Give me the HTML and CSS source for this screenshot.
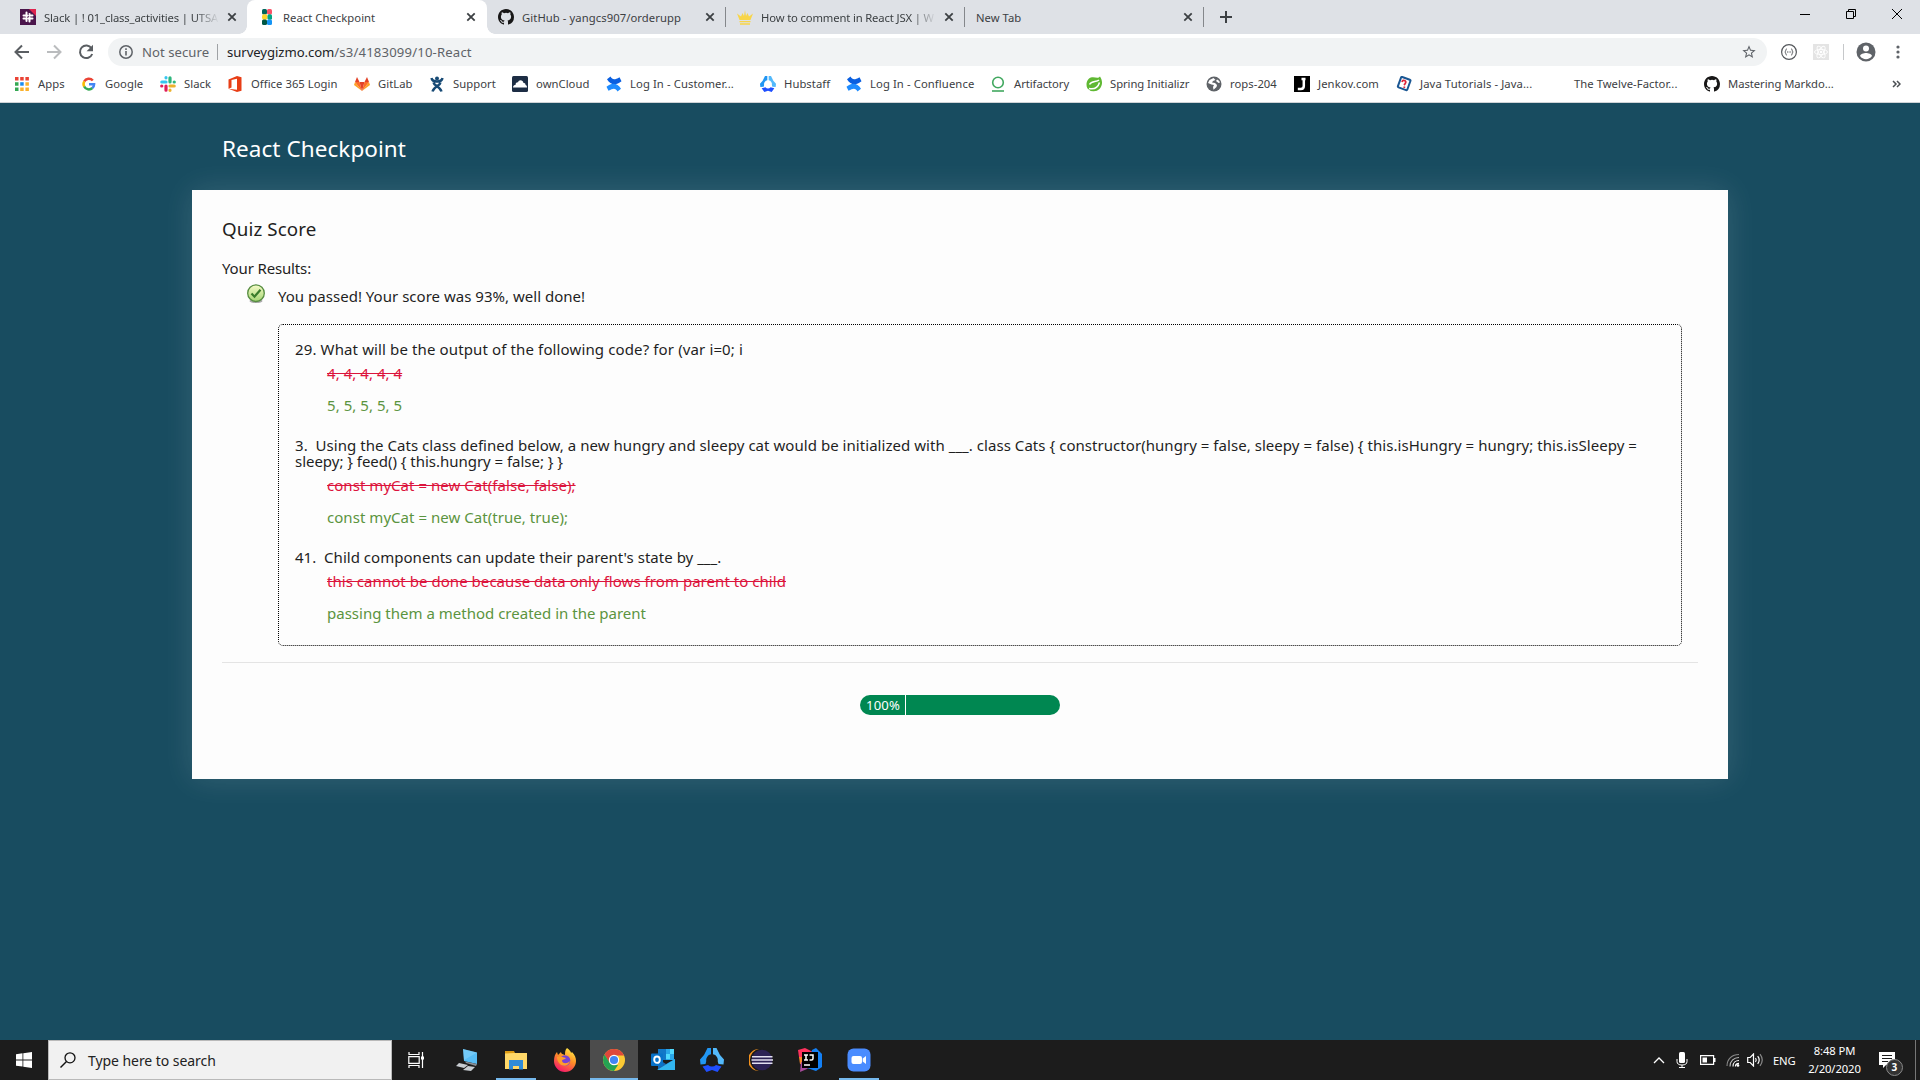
FILE: index.html
```html
<!DOCTYPE html>
<html lang="en">
<head>
<meta charset="utf-8">
<title>React Checkpoint</title>
<link rel="stylesheet" href="styles.css">
</head>
<body>
<svg class="defs" width="0" height="0" aria-hidden="true">
  <symbol id="github" viewBox="0 0 16 16"><path fill="#181717" d="M8 0C3.58 0 0 3.58 0 8c0 3.54 2.29 6.53 5.47 7.59.4.07.55-.17.55-.38 0-.19-.01-.82-.01-1.49-2.01.37-2.53-.49-2.69-.94-.09-.23-.48-.94-.82-1.13-.28-.15-.68-.52-.01-.53.63-.01 1.08.58 1.23.82.72 1.21 1.87.87 2.33.66.07-.52.28-.87.51-1.07-1.78-.2-3.64-.89-3.64-3.95 0-.87.31-1.59.82-2.15-.08-.2-.36-1.02.08-2.12 0 0 .67-.21 2.2.82a7.4 7.4 0 0 1 4 0c1.53-1.04 2.2-.82 2.2-.82.44 1.1.16 1.92.08 2.12.51.56.82 1.27.82 2.15 0 3.07-1.87 3.75-3.65 3.95.29.25.54.73.54 1.48 0 1.07-.01 1.93-.01 2.2 0 .21.15.46.55.38A8 8 0 0 0 16 8c0-4.42-3.58-8-8-8z"/></symbol>
  <symbol id="close" viewBox="0 0 10 10"><path d="M1.3 1.3l7.4 7.4M8.7 1.3L1.3 8.7" stroke="#3c4043" stroke-width="1.8"/></symbol>
  <symbol id="confluence" viewBox="0 0 16 16"><path fill="#0a5fe0" d="M1 3.200L4.500 .5C6.500 4 8.500 4.200 13.500 1.200l2 4C10 9.800 4.500 9 1 3.200z"/><path fill="#1f8cff" d="M15 12.800l-3.500 2.700C9.500 12 7.500 11.800 2.500 14.800l-2-4C6 6.200 11.500 7 15 12.800z"/></symbol>
  <symbol id="slack" viewBox="0 0 16 16"><g stroke-width="3.200" stroke-linecap="round"><path stroke="#36c5f0" d="M1.800 6h4.200M6 1.700v.1"/><path stroke="#2eb67d" d="M10 1.800V6M14.200 6h.1"/><path stroke="#ecb22e" d="M10 10h4.200M10 14.200v.1"/><path stroke="#e01e5a" d="M6 10v4.200M1.700 10h.1"/></g></symbol>
  <symbol id="hubstaff" viewBox="0 0 24 24"><path fill="#2196f3" d="M7.500 0H11v6.300A6 6 0 0 0 6.200 13.500L5.500 16 .5 16.500 0 11.500 4 7z"/><path fill="#53b9fb" d="M16.500 0H13v6.300A6 6 0 0 1 17.800 13.500L18.500 16l5 .5.5-5L20 7z"/><path fill="#1f4fff" d="M2.500 18.500L8 17a6 6 0 0 0 8 0l5.500 1.500L17.500 24 12 22l-5.500 2z"/></symbol>
</svg>

<header class="browser">
  <div class="tabs">
    <div class="tab tab-first">
      <svg class="favicon" viewBox="0 0 16 16"><path fill="#4a154b" d="M0 0h16v16H0z"/><path fill="#e0234e" d="M9 0h7v7z"/><path stroke="#fff" stroke-width="2" stroke-linecap="round" d="M6.500 3.500v4M9.500 5v.1M3.500 6.500h4M9.500 6.500h3M3.500 9.500h3M8.500 9.500h4M6.500 9v3M9.500 8.500v4"/></svg>
      <span class="tab-title faded slack-title">Slack | ! 01_class_activities | UTSA</span>
      <svg class="close"><use href="#close"/></svg>
    </div>
    <div class="tab tab-active">
      <svg class="favicon" viewBox="0 0 16 16"><rect x="3" width="5" height="5.500" rx="1.500" fill="#00665c"/><rect x="8" width="5" height="5.500" rx="1.500" fill="#fa5367"/><rect x="3" y="5.200" width="5.500" height="5.500" rx="2" fill="#fbd62b"/><rect x="8.500" y="5.200" width="4.500" height="5.500" rx="1.500" fill="#00a584"/><rect x="3" y="10.500" width="5" height="5.500" rx="1.500" fill="#005744"/><rect x="8" y="10.500" width="5" height="5.500" rx="1.500" fill="#1595f5"/></svg>
      <span class="tab-title">React Checkpoint</span>
      <svg class="close"><use href="#close"/></svg>
    </div>
    <div class="tab">
      <svg class="favicon"><use href="#github"/></svg>
      <span class="tab-title github-title">GitHub - yangcs907/orderupp</span>
      <svg class="close"><use href="#close"/></svg>
    </div>
    <div class="tab tab-ruled">
      <svg class="favicon" viewBox="0 0 16 16"><path fill="#f8d548" d="M0 4.500l4 3 1.500-3.500L7 7l1-6 1 6 1.500-3L12 7.500l4-3L13.500 11h-11zM2.500 12h11v1.200h-11zM3 14.200h10v1.500H3z"/></svg>
      <span class="tab-title faded jsx-title">How to comment in React JSX | W</span>
      <svg class="close"><use href="#close"/></svg>
    </div>
    <div class="tab tab-ruled tab-last">
      <span class="tab-title">New Tab</span>
      <svg class="close"><use href="#close"/></svg>
    </div>
    <svg class="new-tab" viewBox="0 0 12 12"><path d="M6 0v12M0 6h12" stroke="#3c4043" stroke-width="2"/></svg>
    <div class="window-buttons">
      <svg viewBox="0 0 10 10"><path d="M0 5.500h10" stroke="#000"/></svg>
      <svg viewBox="0 0 10 10"><path d="M.5 2.500h7v7h-7zM2.500 2.500v-2h7v7h-2" fill="none" stroke="#000"/></svg>
      <svg viewBox="0 0 10 10"><path d="M0 0l10 10M10 0L0 10" stroke="#000"/></svg>
    </div>
  </div>

  <div class="toolbar">
    <svg class="nav" viewBox="0 0 16 16"><path d="M15 8H2M8 1.500L1.500 8 8 14.500" fill="none" stroke="#5a5e62" stroke-width="2"/></svg>
    <svg class="nav" viewBox="0 0 16 16"><path d="M1 8h13M8 1.500L14.500 8 8 14.500" fill="none" stroke="#babcbe" stroke-width="2"/></svg>
    <svg class="nav" viewBox="0 0 16 16"><path d="M13.500 4.200A6.300 6.300 0 1 0 14.200 10" fill="none" stroke="#5a5e62" stroke-width="2"/><path d="M15 .8v6.400H8.600z" fill="#5a5e62"/></svg>
    <div class="omnibox">
      <svg class="info" viewBox="0 0 14 14"><circle cx="7" cy="7" r="6.200" fill="none" stroke="#5f6368" stroke-width="1.500"/><path d="M7 6v4.500M7 3.300v1.600" stroke="#5f6368" stroke-width="1.600"/></svg>
      <span class="security">Not secure</span>
      <span class="url"><b>surveygizmo.com</b><span>/s3/4183099/10-React</span></span>
      <svg class="star" viewBox="0 0 24 24"><path fill="#5f6368" d="M22 9.240l-7.190-.62L12 2 9.190 8.630 2 9.240l5.460 4.730L5.820 21 12 17.270 18.180 21l-1.630-7.030L22 9.240zM12 15.400l-3.760 2.270 1-4.280-3.320-2.880 4.380-.38L12 6.100l1.710 4.040 4.380.38-3.320 2.880 1 4.280L12 15.400z"/></svg>
    </div>
    <svg class="ext" viewBox="0 0 16 16"><circle cx="8" cy="8" r="7.400" fill="#fff" stroke="#55585c" stroke-width="1.200"/><path d="M5.800 4.800c-1.400 0-.6 3-2 3.200 1.400.2.600 3.200 2 3.200M10.200 4.800c1.400 0 .6 3 2 3.200-1.400.2-.6 3.200-2 3.200" fill="none" stroke="#55585c"/><path d="M6 8h1M7.600 8h1M9.200 8h1" stroke="#55585c"/></svg>
    <svg class="ext react-ext" viewBox="0 0 16 16"><path fill="#e4e4e4" d="M0 0h16v16H0z"/><g fill="none" stroke="#fff" stroke-width=".9"><ellipse cx="8" cy="8" rx="6.500" ry="2.600"/><ellipse cx="8" cy="8" rx="6.500" ry="2.600" transform="rotate(60 8 8)"/><ellipse cx="8" cy="8" rx="6.500" ry="2.600" transform="rotate(120 8 8)"/></g><circle cx="8" cy="8" r="1.300" fill="#fff"/></svg>
    <i class="toolbar-rule"></i>
    <svg class="avatar" viewBox="0 0 20 20"><circle cx="10" cy="10" r="9.500" fill="#5f6368"/><circle cx="10" cy="6.500" r="3" fill="#fff"/><path fill="#fff" d="M4 14c0-2 4-3.100 6-3.100s6 1.100 6 3.100a7.200 7.200 0 0 1-12 0z"/></svg>
    <svg class="menu" viewBox="0 0 4 16"><g fill="#5f6368"><circle cx="2" cy="3" r="1.600"/><circle cx="2" cy="8" r="1.600"/><circle cx="2" cy="13" r="1.600"/></g></svg>
  </div>

  <nav class="bookmarks">
    <a><svg viewBox="0 0 16 16"><path fill="#ea4335" d="M1 1h3.500v3.500H1zM6.200 1h3.500v3.500H6.200zM11.400 1h3.500v3.500h-3.500z"/><path fill="#34a853" d="M1 6.200h3.500v3.500H1zM1 11.400h3.500v3.500H1z"/><path fill="#1a8cf0" d="M6.200 6.200h3.500v3.500H6.200z"/><path fill="#fbb12b" d="M11.400 6.200h3.500v3.500h-3.500zM6.200 11.400h3.500v3.500H6.200zM11.400 11.400h3.500v3.500h-3.500z"/></svg><span>Apps</span></a>
    <a><svg viewBox="0 0 16 16"><g fill="none" stroke-width="2.500"><path stroke="#ea4335" d="M3.200 5.500A5.200 5.200 0 0 1 11.800 4.500"/><path stroke="#fbbc05" d="M3.300 5.300a5.200 5.200 0 0 0 0 5.400"/><path stroke="#34a853" d="M3.200 10.500a5.200 5.200 0 0 0 8.200 1.500"/><path stroke="#4285f4" d="M8 8.200h5.100a5.200 5.200 0 0 1-1.800 3.900"/></g></svg><span>Google</span></a>
    <a><svg><use href="#slack"/></svg><span>Slack</span></a>
    <a><svg viewBox="0 0 16 16"><path fill="#e83e16" d="M1.500 3.500L10 0l4.500 1.300v13.400L10 16l-8.500-3.200 8.500 1V2.800L4.500 4v7.500l-3 1.300z"/></svg><span>Office 365 Login</span></a>
    <a><svg viewBox="0 0 16 16"><path fill="#fca326" d="M0 9l1-3 7 9zM16 9l-1-3-7 9z"/><path fill="#fc6d26" d="M1 6h4.500L8 15zM15 6h-4.500L8 15z"/><path fill="#e24329" d="M1 6l2-5 2.500 5h5L13 1l2 5h-4.500L8 15 5.500 6z"/></svg><span>GitLab</span></a>
    <a><svg viewBox="0 0 16 16"><circle cx="8" cy="2.500" r="2" fill="#174a75"/><path d="M2.500 2C3 5 6 5.500 8 5.500S13 5 13.500 2M4.500 6.500C5 10 11 10 12.500 15.500M11.500 6.500C11 10 5 10 3.500 15.500" fill="none" stroke="#174a75" stroke-width="2.400"/></svg><span>Support</span></a>
    <a><svg viewBox="0 0 16 16"><rect width="16" height="16" rx="1.500" fill="#1d2d44"/><path fill="#fff" d="M1 11.500c0-2 1.500-2.500 2.500-2.500 0-2 1.500-3 2.500-2.500.5-3 5-3 5.500.5 2-.2 2 1 2 2 1 0 1.500 1 1.500 2.500z"/></svg><span>ownCloud</span></a>
    <a><svg><use href="#confluence"/></svg><span class="wide">Log In - Customer...</span></a>
    <a><svg><use href="#hubstaff"/></svg><span>Hubstaff</span></a>
    <a><svg><use href="#confluence"/></svg><span class="wide">Log In - Confluence</span></a>
    <a><svg viewBox="0 0 16 16"><circle cx="8" cy="6.500" r="5.300" fill="none" stroke="#41a85f" stroke-width="1.600"/><path d="M2 15h12" stroke="#41a85f" stroke-width="1.600"/></svg><span class="snug">Artifactory</span></a>
    <a><svg viewBox="0 0 16 16"><path fill="#5fb832" d="M14 .5c3 4.500 2.500 9.500-.5 12.500a8 7.500 0 0 1-12-.5C-1 8 1.500 2 6 1.300 9 .8 12 3 14 .5z"/><path fill="none" stroke="#fff" stroke-width="1.500" d="M13 4C10.500 6.500 5.500 4.500 3.500 8.500M3 12.500c5 1 9-1 10.500-6"/></svg><span class="snug">Spring Initializr</span></a>
    <a><svg viewBox="0 0 16 16"><circle cx="8" cy="8" r="7.500" fill="#5f6368"/><path fill="#fff" d="M7.500 2L3.500 4 2 7l3.500 1.500L8 9l-1 2 .5 2.800L10.500 11l.5-2-2-2-3-.5L7 5l2.500-1zM11 3.500l-1 1.500 2.500 2 1.500-.5c-.5-1.500-1.500-2.500-3-3z"/></svg><span>rops-204</span></a>
    <a><svg viewBox="0 0 16 16"><path d="M0 0h16v16H0z"/><path d="M9.800 2.500v7.500q0 3-3 3h-3M7.500 3h4" fill="none" stroke="#fff" stroke-width="2.500"/></svg><span class="wide">Jenkov.com</span></a>
    <a><svg viewBox="0 0 16 16"><rect x="3" y="2" width="10" height="11" rx="1" transform="rotate(20 8 8)" fill="#fff" stroke="#1b5793" stroke-width="2"/><path d="M6 6q1-2.500 3-1.300T8 9M8.300 10.500v1.500" fill="none" stroke="#e0263b" stroke-width="1.800"/></svg><span class="wide">Java Tutorials - Java...</span></a>
    <a><i></i><span>The Twelve-Factor...</span></a>
    <a><svg><use href="#github"/></svg><span class="snug">Mastering Markdo...</span></a>
    <svg class="more" viewBox="0 0 9 8"><path d="M1 1l3 3-3 3M5 1l3 3-3 3" fill="none" stroke="#4b4f53" stroke-width="1.500"/></svg>
  </nav>
</header>

<main class="survey">
  <h1>React Checkpoint</h1>
  <section class="card">
    <h2>Quiz Score</h2>
    <p class="results-label">Your Results:</p>
    <div class="passed">
      <svg viewBox="0 0 20 20"><defs><linearGradient id="ok" x2="0" y2="1"><stop stop-color="#f6fbc8"/><stop offset="1" stop-color="#a4d573"/></linearGradient></defs><ellipse cx="10" cy="17" rx="6.500" ry="2" fill="#aaa"/><circle cx="10" cy="9.200" r="8.300" fill="url(#ok)" stroke="#568d40" stroke-width="1.300"/><path d="M5.500 9.500l3 3.200 6-7" fill="none" stroke="#3b7c2b" stroke-width="2.200"/></svg>
      <p>You passed! Your score was 93%, well done!</p>
    </div>
    <div class="answers">
      <article>
        <p class="q-loop">29. What will be the output of the following code? for (var i=0; i</p>
        <del>4, 4, 4, 4, 4</del>
        <ins>5, 5, 5, 5, 5</ins>
      </article>
      <article>
        <p>3.&nbsp; Using the Cats class defined below, a new hungry and sleepy cat would be initialized with ___. class Cats { constructor(hungry = false, sleepy = false) { this.isHungry = hungry; this.isSleepy = <span class="q-tail">sleepy; } feed() { this.hungry = false; } }</span></p>
        <del>const myCat = new Cat(false, false);</del>
        <ins>const myCat = new Cat(true, true);</ins>
      </article>
      <article>
        <p class="q-child">41.&nbsp; Child components can update their parent's state by ___.</p>
        <del>this cannot be done because data only flows from parent to child</del>
        <ins class="a-method">passing them a method created in the parent</ins>
      </article>
    </div>
    <hr>
    <div class="progress"><span>100%</span></div>
  </section>
</main>

<footer class="taskbar">
  <div class="start"><svg viewBox="0 0 16 16"><path fill="#fff" d="M0 2.200L6.500 1.300v6.200H0zM7.300 1.200L16 0v7.500H7.300zM0 8.400h6.500v6.200L0 13.700zM7.300 8.400H16V16l-8.700-1.200z"/></svg></div>
  <div class="search">
    <svg viewBox="0 0 16 16"><circle cx="10" cy="5.800" r="5" fill="none" stroke="#111" stroke-width="1.300"/><path d="M6.500 9.500L.5 15.500" stroke="#111" stroke-width="1.400"/></svg>
    <span>Type here to search</span>
  </div>
  <div class="apps">
    <div class="app first-app"><svg class="task-view" viewBox="0 0 16 16"><path d="M1 0v2.500h10V0M1 16v-2.500h10V16M.8 4.700h10.400v6.600H.8zM14.500 0v16" fill="none" stroke="#fff" stroke-width="1.200"/><path fill="#fff" d="M13 4.500h3v3h-3z"/></svg></div>
    <div class="app"><svg viewBox="0 0 24 24"><path fill="#58bdf5" d="M8 1l14 3.500V16L9 13z"/><path fill="#9ddcfb" d="M8 1l14 3.500L9 12z" opacity=".4"/><path fill="#c8cdd2" d="M4 15l9 2-4 3-8-2zM13 18l7 1-4 4-8-1z"/><path fill="#8a9096" d="M10 13.500l12 2.500-1 2-10-3z"/></svg></div>
    <div class="app open"><svg viewBox="0 0 24 24"><path fill="#dd9b13" d="M1 3h9l1.500 3H1z"/><path fill="#ffd868" d="M1 5.500l10-.5h12v16H1z"/><path fill="#2f8bd8" d="M5 12h14v9.500h-4V18H9v3.500H5z"/></svg></div>
    <div class="app"><svg viewBox="0 0 24 24"><defs><linearGradient id="fox" x1=".8" y1="0" x2=".3" y2="1"><stop stop-color="#fff14a"/><stop offset=".45" stop-color="#ff9026"/><stop offset="1" stop-color="#f5156c"/></linearGradient></defs><path fill="url(#fox)" d="M14 0c3 2 4 4 4 5l1-1c3 3 4 6 4 9a11 11 0 0 1-22 0c0-4 1-7 3-9l1 3 3-3c0 2 2 2 4 3 0-3 0-5 2-7z"/><circle cx="12" cy="12.500" r="5.300" fill="#7542d6"/><path fill="#ff9c2b" d="M4 9c3-2 5 0 9 1-1 2-4 1-4 3 1 3 5 3 8 0-1 5-7 6-10 3-2-2-3-4-3-7z"/></svg></div>
    <div class="app open active"><svg viewBox="0 0 24 24"><circle cx="12" cy="12" r="11" fill="#fbc934"/><path fill="#df483b" d="M2.500 6.500A11 11 0 0 1 22 7.500H12L7 14.500z"/><path fill="#25a353" d="M2.500 6.500l5 8 4.500 2.500h4L12 23A11 11 0 0 1 2.500 6.500z"/><circle cx="12" cy="12" r="5.200" fill="#fff"/><circle cx="12" cy="12" r="4.100" fill="#4285f4"/></svg></div>
    <div class="app"><svg viewBox="0 0 24 24"><path fill="#1277c8" d="M7 1h8v11H7z"/><path fill="#2aa7ea" d="M15 1h8v11h-8z"/><path fill="#50d9ff" d="M15 6h4v5h-4zM19 1h4v5h-4z"/><path fill="#1769b4" d="M7 11l8 5 9-5v11H7z"/><path fill="#32b5ef" d="M6 22l18-11v11z"/><rect y="5.500" width="12" height="12.500" rx="1" fill="#0872c9"/><ellipse cx="6" cy="11.700" rx="2.800" ry="3.200" fill="none" stroke="#fff" stroke-width="1.900"/></svg></div>
    <div class="app"><svg><use href="#hubstaff"/></svg></div>
    <div class="app"><svg viewBox="0 0 24 24"><path fill="#f7941e" d="M10 1A11.200 11.200 0 0 0 10 23 10 10 0 0 1 10 1z"/><circle cx="13" cy="12" r="10.300" fill="#2c2255"/><path d="M3 8.800h20.500M2.500 12h21.500M3 15.200h20.500" stroke="#e2dff0" stroke-width="1.600"/></svg></div>
    <div class="app"><svg viewBox="0 0 24 24"><path fill="#fe315d" d="M0 2l7-2 8 4-6 9-8-4z"/><path fill="#fc8a2a" d="M1 9h5v8l-4-1z"/><path fill="#a64a9a" d="M3 14l9 4-3 3-7 3z"/><path fill="#1380f5" d="M14 2l4-2 6 6v13l-6 4-9-3z"/><path d="M4 4h16v16H4z"/><path stroke="#fff" stroke-width="1.500" fill="none" d="M6 7h4M8 7v5M6 12h4M11.500 7H15v3.500q0 1.500-1.500 1.500h-2M6 17h6"/></svg></div>
    <div class="app open"><svg viewBox="0 0 24 24"><rect x=".5" y=".5" width="23" height="23" rx="6" fill="#4a8cff"/><rect x="4.500" y="8" width="10.500" height="8" rx="2" fill="#fff"/><path fill="#fff" d="M15.700 10.500L19 8v8l-3.300-2.500z"/></svg></div>
  </div>
  <div class="tray">
    <svg class="chevron" viewBox="0 0 12 8"><path d="M1 7l5-5 5 5" fill="none" stroke="#fff" stroke-width="1.300"/></svg>
    <svg class="mic" viewBox="0 0 12 16"><rect x="3" width="6" height="11" rx="1.500" fill="#fff"/><path d="M1 7v2.500Q1 13 6 13t5-3.500V7M6 13v3M3 15.500h6" fill="none" stroke="#fff"/></svg>
    <svg class="battery" viewBox="0 0 16 10"><path d="M.6.600h13v8.800H.6z" fill="none" stroke="#fff" stroke-width="1.200"/><path fill="#fff" d="M2.500 2.500h4.500v5H2.500zM14 3h1.500v4H14z"/></svg>
    <svg class="wifi" viewBox="0 0 14 14"><g fill="none" stroke="#888" stroke-width="1.100"><path d="M1 13C1 6 6 1.500 13 1.500"/><path stroke="#bbb" d="M4 13.500C4 8 8 4.500 13 4.500"/><path stroke="#fff" d="M7 13.500c0-4 3-6 6-6"/></g><path stroke="#fff" stroke-width="1.300" fill="none" d="M9.500 13.500q0-3 3.500-3"/><circle cx="12" cy="12.500" r="1.300" fill="#fff"/></svg>
    <svg class="speaker" viewBox="0 0 16 14"><path d="M.7 4.500h2.500L6.500 1v12L3.200 9.500H.7z" fill="none" stroke="#fff" stroke-width="1.200"/><path d="M8.500 5q1.500 2 0 4M10.700 3.200q3 3.800 0 7.600" fill="none" stroke="#fff" stroke-width="1.200"/><path d="M13 1.200q4.500 5.800 0 11.600" fill="none" stroke="#888" stroke-width="1.200"/></svg>
    <span class="lang">ENG</span>
    <div class="clock"><span>8:48 PM</span><span>2/20/2020</span></div>
    <div class="notice">
      <svg viewBox="0 0 16 16"><path fill="#fff" d="M0 0h16v13H7l-3 3v-3H0z"/><path d="M3 3.500h10M3 6.500h10M3 9.500h6" stroke="#1c1c1c" stroke-width="1.200"/></svg>
      <b>3</b>
    </div>
  </div>
</footer>
</body>
</html>
```
FILE: styles.css
```css
* { box-sizing: border-box; }

body {
  margin: 0;
  height: 1080px;
  display: flex;
  flex-direction: column;
  overflow: hidden;
  background: #184c60;
  font-family: "Noto Sans", "Open Sans", sans-serif;
  font-size: 15px;
  letter-spacing: 0.045px;
  color: #1f1f1f;
}

h1, h2, p { margin: 0; font-weight: 400; }
svg { display: block; flex: none; }
.defs { position: absolute; }

/* Browser chrome */
.browser {
  height: 103px;
  flex: none;
  background: #fff;
  border-bottom: 1px solid #cfd3d7;
  font-size: 11.25px;
  color: #3c4043;
}

.tabs {
  display: flex;
  align-items: center;
  height: 34px;
  background: #dee1e6;
}

.tab {
  position: relative;
  display: flex;
  align-items: center;
  width: 239px;
  height: 34px;
  padding: 0 11px;
  gap: 8px;
}
.tab-first { width: 247px; padding: 0 10px 0 20px; }
.tab-active { width: 240px; padding-left: 12px; background: #fff; border-radius: 8px 8px 0 0; }
.tab-active::before, .tab-active::after {
  content: "";
  position: absolute;
  bottom: 0;
  width: 8px;
  height: 8px;
}
.tab-active::before { left: -8px; background: radial-gradient(circle at 0 0, transparent 7.5px, #fff 8px); }
.tab-active::after { right: -8px; background: radial-gradient(circle at 100% 0, transparent 7.5px, #fff 8px); }
.tab-ruled::before {
  content: "";
  position: absolute;
  left: -1px;
  top: 7px;
  width: 1px;
  height: 20px;
  background: #84878b;
}
.tab-last::after {
  content: "";
  position: absolute;
  right: 0;
  top: 7px;
  width: 1px;
  height: 20px;
  background: #84878b;
}
.favicon { width: 16px; height: 16px; }
.tab-title { flex: 1; min-width: 0; white-space: nowrap; }
.faded {
  -webkit-mask-image: linear-gradient(to right, #000 calc(100% - 24px), transparent);
  mask-image: linear-gradient(to right, #000 calc(100% - 24px), transparent);
}
.slack-title { letter-spacing: -0.137px; }
.github-title { letter-spacing: 0.076px; }
.jsx-title { letter-spacing: -0.14px; }
.close { width: 10px; height: 10px; }
.new-tab { width: 12px; height: 12px; margin-left: 16px; }
.window-buttons { display: flex; gap: 36px; margin: -6px 18px 0 auto; }
.window-buttons svg { width: 10px; height: 10px; }

.toolbar { display: flex; align-items: center; height: 36px; padding-left: 14px; }
.nav { width: 16px; height: 16px; margin-right: 16px; }
.omnibox {
  display: flex;
  align-items: center;
  width: 1659px;
  height: 28px;
  margin-left: -2px;
  padding: 0 10px 0 11px;
  border-radius: 14px;
  background: #f1f3f4;
  font-size: 13.125px;
  color: #5f6368;
}
.info { width: 14px; height: 14px; margin-right: 9px; }
.security { width: 76px; height: 16px; line-height: 16px; border-right: 1px solid #9fa2a5; }
.url { margin-left: 9px; flex: 1; }
.url b { font-weight: 400; color: #202124; letter-spacing: -0.05px; }
.url span { letter-spacing: 0.17px; }
.star { width: 16px; height: 16px; }
.ext { width: 16px; height: 16px; margin-left: 14px; }
.react-ext { margin-left: 16px; }
.toolbar-rule { width: 1px; height: 16px; margin-left: 14px; background: #c6c8ca; }
.avatar { width: 20px; height: 20px; margin-left: 12px; }
.menu { width: 4px; height: 16px; margin-left: 20px; }

.bookmarks {
  display: grid;
  grid-template-columns: 67px 79px 67px 127px 75px 83px 94px 154px 86px 144px 96px 120px 88px 102px 154px 154px 188px 9px;
  align-items: center;
  height: 27px;
  padding-left: 14px;
}
.bookmarks a { display: flex; align-items: center; gap: 8px; height: 17px; white-space: nowrap; }
.bookmarks a svg, .bookmarks i { width: 16px; height: 16px; }
.wide { letter-spacing: 0.1px; }
.snug { letter-spacing: -0.05px; }
.more { width: 9px; height: 8px; }

/* Survey page */
.survey { flex: 1; padding: 0 192px; }
h1 {
  height: 87px;
  padding: 4px 30px 0;
  font-size: 22.5px;
  line-height: 84px;
  letter-spacing: 0.063px;
  color: #fff;
}
.card {
  height: 589px;
  padding: 26px 30px 0;
  background: #fdfdfd;
  box-shadow: 0 0 30px rgba(255, 255, 255, 0.13);
}
h2 { font-size: 18.75px; line-height: 26px; letter-spacing: 0.116px; }
.results-label { margin-top: 16px; line-height: 20px; letter-spacing: -0.147px; }
.passed { display: flex; gap: 12px; margin-top: 8px; padding-left: 24px; line-height: 20px; }
.passed p { letter-spacing: 0.02px; }
.passed svg { width: 20px; height: 20px; margin-top: -2px; }
.answers {
  height: 322px;
  margin: 18px 16px 0 56px;
  padding: 16px;
  border: 1px dotted #000;
  border-radius: 5px;
  line-height: 16px;
}
article + article { margin-top: 24px; }
.q-loop { letter-spacing: 0.126px; }
.q-tail { letter-spacing: -0.028px; }
.q-child { letter-spacing: 0.025px; }
del, ins { display: block; width: fit-content; margin-left: 32px; }
del { margin-top: 8px; color: #dc143c; }
ins { margin-top: 16px; color: #5b9440; text-decoration: none; }
.a-method { letter-spacing: 0.005px; }
hr { height: 1px; margin: 16px 0 0; border: 0; background: #e4e4e4; }
.progress {
  width: 200px;
  height: 20px;
  margin: 32px auto 0;
  overflow: hidden;
  border-radius: 10px;
  background: #008751;
}
.progress span {
  display: block;
  width: 46px;
  padding-left: 6px;
  border-right: 1px solid #fff;
  font-size: 13.125px;
  line-height: 20px;
  letter-spacing: 0.15px;
  color: #fff;
}

/* Taskbar */
.taskbar { display: flex; height: 40px; flex: none; background: #1c1c1c; color: #fff; }
.start { width: 48px; padding: 12px 16px; }
.start svg { width: 16px; height: 16px; }
.search {
  display: flex;
  align-items: center;
  gap: 12px;
  width: 344px;
  padding-left: 11px;
  border: 1px solid #b9b9b9;
  background: #f1f1f1;
  color: #222;
  font-size: 14px;
  letter-spacing: -0.06px;
}
.search svg { width: 16px; height: 16px; }
.apps { display: flex; gap: 1px; }
.app { display: flex; align-items: center; justify-content: center; width: 48px; height: 40px; }
.first-app { margin-right: 2px; }
.app svg { width: 24px; height: 24px; }
.app .task-view { width: 16px; height: 16px; }
.open { background: linear-gradient(#76b9ed, #76b9ed) 50% 100% / 40px 2px no-repeat; }
.active { background: linear-gradient(#76b9ed, #76b9ed) 50% 100% / 48px 2px no-repeat #4c4c4c; }

.tray { display: flex; align-items: center; width: 263px; margin-left: auto; margin-right: 4px; border-right: 1px solid #777; font-size: 11.25px; }
.chevron { width: 12px; height: 8px; }
.mic { width: 12px; height: 16px; margin-left: 11px; }
.battery { width: 16px; height: 10px; margin-left: 12px; }
.wifi { width: 14px; height: 14px; margin-left: 10px; }
.speaker { width: 16px; height: 14px; margin-left: 7px; }
.lang { width: 23px; margin-left: 10px; letter-spacing: -0.165px; }
.clock { display: flex; flex-direction: column; align-items: center; width: 53px; margin-left: 12px; line-height: 18px; letter-spacing: -0.1px; }
.notice { position: relative; margin-left: 18px; }
.notice svg { width: 16px; height: 16px; }
.notice b {
  position: absolute;
  left: 7px;
  top: 7px;
  width: 17px;
  height: 17px;
  border: 1px solid #8a8a8a;
  border-radius: 50%;
  background: #333;
  font-size: 10px;
  line-height: 15px;
  text-align: center;
}
```
